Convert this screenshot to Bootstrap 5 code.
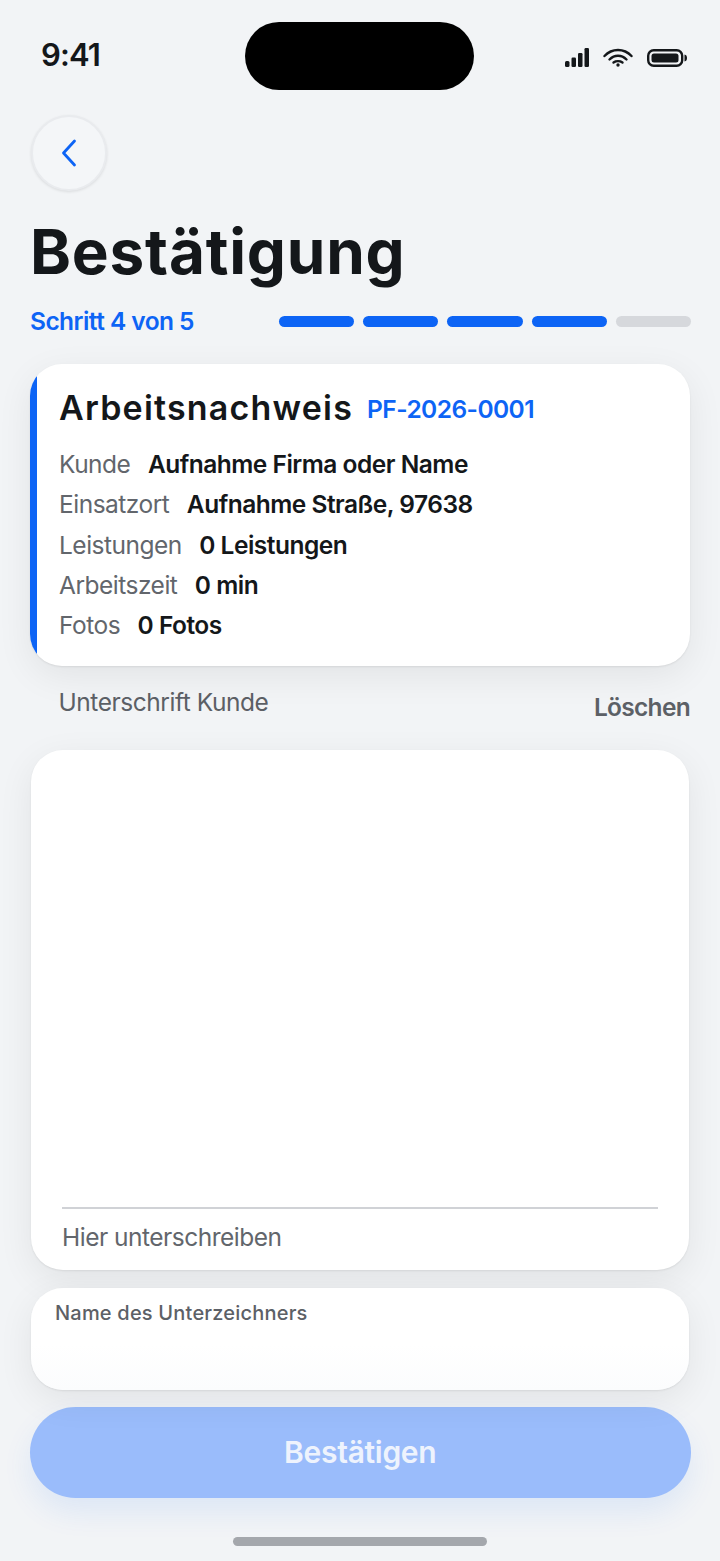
<!DOCTYPE html>
<html lang="de">
  <head>
    <meta charset="UTF-8" />
    <meta name="viewport" content="width=device-width, initial-scale=1.0">
    <title>Bestätigung</title>
    <link href="https://cdn.jsdelivr.net/npm/bootstrap@5.3.0/dist/css/bootstrap.min.css" rel="stylesheet">
    <style>
      html, body { height: 100%; }
      body { font-family: Inter, "Liberation Sans", sans-serif; background-color: #f2f4f6; color: #14171a; }
      .phone { width: 720px; height: 1561px; overflow: hidden; }
      .status-row { height: 68px; margin-top: 22px; padding: 0 32px 0 41px; }
      .clock { width: 204px; font-size: 31px; font-weight: 600; line-height: 1; margin-top: -4px; letter-spacing: -.9px; }
      .island { width: 229px; height: 68px; border-radius: 34px; background: #000; }
      .status-icons { margin-top: 3px; padding-left: 91px; gap: 14px; }
      .content { padding: 25px 30px 0; }
      .back-btn { width: 76px; height: 76px; margin-left: 1px; border-radius: 50%; background: #f4f6f8; border: 2px solid #e9ebee; box-shadow: 0 1px 3px rgba(0,0,0,.1); }
      .page-title { font-size: 62px; font-weight: 700; line-height: 68px; letter-spacing: .8px; margin: 27px 0 0; }
      .step-row { margin-top: 17px; margin-right: -1px; height: 36px; }
      .step-label { font-size: 24.500px; font-weight: 600; letter-spacing: -.55px; color: #0d64f5; }
      .step-bars { gap: 9px; width: 412px; }
      .step-bar { flex: 1; height: 11px; border-radius: 6px; background: #0d64f5; }
      .step-bar.todo { background: #d6d8dc; }
      .sheet { background: #fff; border: 0; border-radius: 32px; box-shadow: 0 10px 36px rgba(0,0,0,.07), 0 1px 2px rgba(0,0,0,.08); }
      .summary { margin-top: 25px; height: 302px; padding: 22px 0 0 29px; overflow: hidden; }
      .summary::before { content: ""; position: absolute; left: 0; top: 0; bottom: 0; width: 7px; background: #0d64f5; }
      .summary-title { font-size: 34px; font-weight: 600; line-height: 44px; letter-spacing: 1.200px; }
      .summary-id { font-size: 24.500px; font-weight: 600; letter-spacing: -.55px; color: #0d64f5; margin-left: 14px; position: relative; top: 1px; }
      .fact { font-size: 24.500px; line-height: 40.300px; letter-spacing: -.5px; }
      .fact-rows { margin-top: 14px; }
      .fact-label { color: #62666c; margin-right: 17.500px; }
      .fact-value { font-weight: 600; color: #14171a; }
      .sign-head { height: 84px; padding: 18px 0 0 28.500px; }
      .sign-label { font-size: 24.500px; line-height: 36px; letter-spacing: -.45px; color: #5c6066; }
      .clear-btn { font-size: 24.500px; font-weight: 600; letter-spacing: -.7px; color: #5c6066; line-height: 36px; margin-top: 5px; }
      .sign-pad { margin: 0 1px; height: 520px; padding: 0 31px; }
      .sign-line { height: 2px; background: #d0d2d6; margin-top: 457px; }
      .sign-hint { font-size: 24.500px; line-height: 36px; letter-spacing: -.5px; margin-top: 10px; color: #62666c; }
      .name-box { margin: 18px 1px 0; height: 102px; padding: 12px 24px; background: linear-gradient(#fff 55%, #fbfcfd); }
      .name-label { font-size: 20px; font-weight: 500; letter-spacing: .2px; line-height: 26px; color: #5c6066; }
      .confirm-btn { margin: 17px 0 0 -.5px; width: 661.500px; height: 91px; border: 0; border-radius: 46px; background: #9abcfb; color: #eef3fd; font-size: 30px; font-weight: 600; letter-spacing: -.3px; box-shadow: 0 14px 30px rgba(13,100,245,.09); }
      .home-bar { width: 254px; height: 9px; margin: 39px auto 0; border-radius: 5px; background: #a4a7ac; }
    </style>
  </head>
  <body>
    <div class="phone">
      <div class="status-row d-flex align-items-center">
        <div class="clock">9:41</div>
        <div class="island flex-shrink-0"></div>
        <div class="status-icons d-flex align-items-center flex-shrink-0">
          <svg width="24" height="19" viewBox="0 0 24 19" fill="#14171a"><rect x="0" y="13" width="4.500" height="6" rx="1.500"/><rect x="6.500" y="9.500" width="4.500" height="9.500" rx="1.200"/><rect x="13" y="5" width="4.500" height="14" rx="1.200"/><rect x="19.500" y="0" width="4.500" height="19" rx="1.200"/></svg>
          <svg width="30" height="19" viewBox="0 0 30 19" fill="none" stroke="#14171a" stroke-width="2.400" stroke-linecap="round"><path d="M1.500 8C9 0 21 0 28.500 8"/><path d="M6.500 11.500C11.500 6.500 18.500 6.500 23.500 11.500"/><path d="M10.500 14.500C13 12.800 17 12.800 19.500 14.500"/><circle cx="15" cy="17" r="1.700" fill="#14171a" stroke="none"/></svg>
          <svg width="40" height="18" viewBox="0 0 40 18"><rect x="1.200" y="1.200" width="34" height="15.600" rx="5.500" fill="none" stroke="#14171a" stroke-width="2.400"/><rect x="4.500" y="4.500" width="27" height="9" rx="2.500" fill="#14171a"/><path d="M37.500 5.500c1.700.3 2.500 1.500 2.500 3.500s-.8 3.200-2.500 3.500z" fill="#14171a"/></svg>
        </div>
      </div>

      <div class="content">
        <button class="back-btn d-flex align-items-center justify-content-center p-0" type="button" aria-label="Zurück">
          <svg width="18" height="28" viewBox="0 0 18 28" fill="none" stroke="#0d64f5" stroke-width="2.800" stroke-linecap="round" stroke-linejoin="round"><path d="M14.500 2 L3.500 14 L14.500 26"/></svg>
        </button>

        <h1 class="page-title">Bestätigung</h1>

        <div class="step-row d-flex align-items-center justify-content-between">
          <span class="step-label">Schritt 4 von 5</span>
          <div class="step-bars d-flex">
            <div class="step-bar"></div>
            <div class="step-bar"></div>
            <div class="step-bar"></div>
            <div class="step-bar"></div>
            <div class="step-bar todo"></div>
          </div>
        </div>

        <div class="card sheet summary">
          <div class="d-flex align-items-center">
            <span class="summary-title">Arbeitsnachweis</span>
            <span class="summary-id">PF-2026-0001</span>
          </div>
          <div class="fact-rows">
            <div class="fact"><span class="fact-label">Kunde</span><span class="fact-value">Aufnahme Firma oder Name</span></div>
            <div class="fact"><span class="fact-label">Einsatzort</span><span class="fact-value">Aufnahme Straße, 97638</span></div>
            <div class="fact"><span class="fact-label">Leistungen</span><span class="fact-value">0 Leistungen</span></div>
            <div class="fact"><span class="fact-label">Arbeitszeit</span><span class="fact-value">0 min</span></div>
            <div class="fact"><span class="fact-label">Fotos</span><span class="fact-value">0 Fotos</span></div>
          </div>
        </div>

        <div class="sign-head d-flex justify-content-between align-items-start">
          <span class="sign-label">Unterschrift Kunde</span>
          <span class="clear-btn">Löschen</span>
        </div>

        <div class="card sheet sign-pad">
          <div class="sign-line"></div>
          <div class="sign-hint">Hier unterschreiben</div>
        </div>

        <div class="card sheet name-box">
          <div class="name-label">Name des Unterzeichners</div>
        </div>

        <button class="btn confirm-btn d-block" type="button">Bestätigen</button>
        <div class="home-bar"></div>
      </div>
    </div>
    <script src="https://cdn.jsdelivr.net/npm/bootstrap@5.3.0/dist/js/bootstrap.bundle.min.js"></script>
  </body>
</html>
